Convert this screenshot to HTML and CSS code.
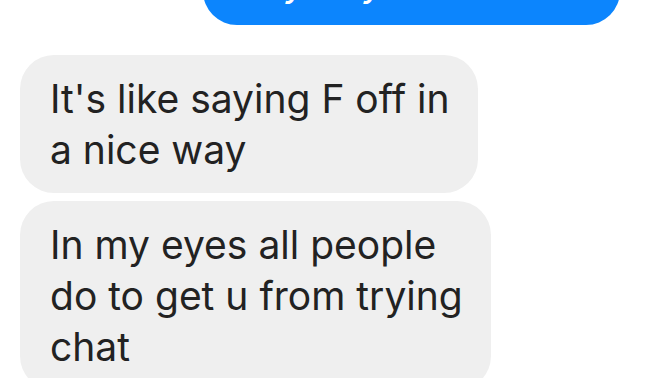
FILE: index.html
```html
<!DOCTYPE html>
<html lang="en">
<head>
    <meta charset="UTF-8">
    <meta name="viewport" content="width=device-width, initial-scale=1.0">
    <title>Chat</title>
    <link rel="stylesheet" href="styles.css">
</head>
<body>
    <div class="chat">
        <!-- Sent message (scrolled mostly out of view) -->
        <div class="msg msg-out">What does she mean by<br>Any day now</div>

        <!-- Received messages -->
        <div class="msg msg-in">It's like saying F off in<br>a nice way</div>
        <div class="msg msg-in">In my eyes all people<br>do to get u from trying<br>chat</div>
    </div>
</body>
</html>
```

FILE: styles.css
```css
body {
    font-family: Inter, "Liberation Sans", Arial, sans-serif;
    background: #fff;
    margin: 0;
    padding: 0;
    height: 378px;
    overflow: hidden;
}

.chat {
    display: flex;
    flex-direction: column;
    gap: 8px;
    padding: 0 52px 0 20px;
}

.msg {
    font-size: 39px;
    line-height: 51px;
    padding: 18px 28px 18px 30px;
    border-radius: 34px;
    box-sizing: border-box;
    white-space: nowrap;
}

.msg-out {
    align-self: flex-end;
    width: 417px;
    margin-top: -113px;
    margin-bottom: 22px;
    background: #0c85fd;
    color: #fff;
}

.msg-in {
    align-self: flex-start;
    background: #efefef;
    color: #222;
}
```
